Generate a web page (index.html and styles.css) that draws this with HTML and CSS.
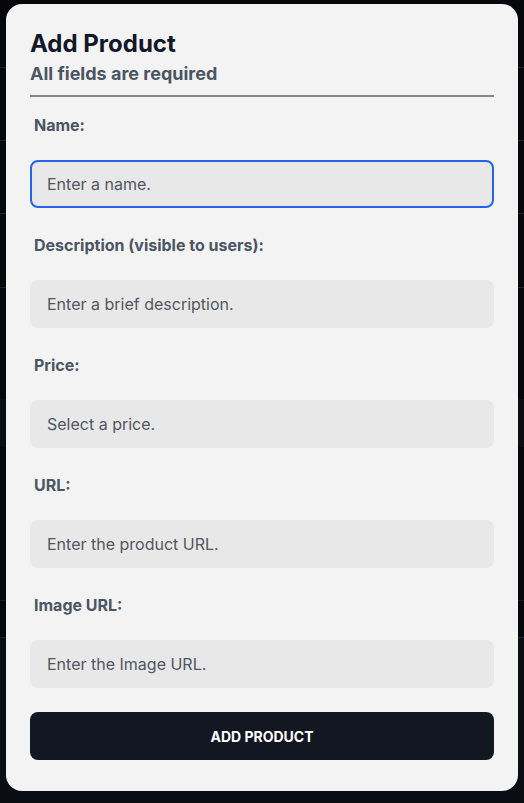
FILE: index.html
```html
<!DOCTYPE html>
<html lang="en">
<head>
<meta charset="utf-8">
<title>Add Product</title>
<link rel="stylesheet" href="styles.css">
</head>
<body>
<div class="backdrop">
  <div class="bg-row r1"></div>
  <div class="bg-row r2"></div>
  <div class="bg-row r3"></div>
  <div class="bg-row r4"></div>
  <div class="bg-row r5"></div>
  <div class="bg-row r6"></div>
  <div class="bg-row r7"></div>
  <div class="bg-row r8"></div>
  <div class="bg-row r9"></div>
</div>
<div class="overlay">
  <form class="modal">
    <div class="modal-head">
      <h1 class="title">Add Product</h1>
      <p class="subtitle">All fields are required</p>
    </div>
    <div class="field">
      <label class="label" for="name">Name:</label>
      <input class="input focused" id="name" type="text" placeholder="Enter a name.">
    </div>
    <div class="field">
      <label class="label" for="desc">Description (visible to users):</label>
      <input class="input" id="desc" type="text" placeholder="Enter a brief description.">
    </div>
    <div class="field">
      <label class="label" for="price">Price:</label>
      <input class="input" id="price" type="text" placeholder="Select a price.">
    </div>
    <div class="field">
      <label class="label" for="url">URL:</label>
      <input class="input" id="url" type="text" placeholder="Enter the product URL.">
    </div>
    <div class="field">
      <label class="label" for="img">Image URL:</label>
      <input class="input" id="img" type="text" placeholder="Enter the Image URL.">
    </div>
    <button class="submit" type="button">ADD PRODUCT</button>
  </form>
</div>
</body>
</html>
```
FILE: styles.css
```css
* { box-sizing: border-box; }
html, body {
  margin: 0;
  padding: 0;
  height: 100%;
}
body {
  background: #06070a;
  font-family: Inter, "Noto Sans", sans-serif;
  overflow: hidden;
}
.backdrop {
  display: flex;
  flex-direction: column;
}
.bg-row { flex: none; }
.r1 { height: 68px; border-bottom: 1px solid #1b2432; }
.r2 { height: 73px; border-bottom: 1px solid #1b2432; }
.r3 { height: 73px; border-bottom: 1px solid #1b2432; }
.r4 { height: 74px; border-bottom: 1px solid #1b2432; }
.r5 { height: 111px; }
.r6 { height: 48px; background: #0b0d13; }
.r7 { height: 154px; border-bottom: 1px solid #15171c; }
.r8 { height: 37px; border-bottom: 1px solid #1b2432; }
.r9 { height: 170px; background: #0b0d14; }
.overlay {
  position: fixed;
  inset: 0;
  padding: 4px 6px;
}
.modal {
  width: 512px;
  height: 787px;
  background: #f3f3f3;
  border-radius: 16px;
  padding: 24px 24px 31px;
  display: flex;
  flex-direction: column;
  margin: 0;
}
.modal-head {
  border-bottom: 2px solid #878787;
  padding-bottom: 7px;
  margin-bottom: 18px;
}
.title {
  margin: 0;
  font-size: 24px;
  line-height: 32px;
  font-weight: 700;
  color: #111827;
}
.subtitle {
  margin: 0;
  font-size: 18px;
  line-height: 28px;
  font-weight: 700;
  color: #4b5563;
}
.field {
  display: flex;
  flex-direction: column;
  margin-bottom: 27px;
}
.field:last-of-type { margin-bottom: 24px; }
.label {
  font-size: 16px;
  line-height: 20px;
  font-weight: 700;
  color: #4b5563;
  padding: 0 4px;
  margin-bottom: 25px;
}
.input {
  height: 48px;
  width: 100%;
  border: 2px solid transparent;
  border-radius: 8px;
  background: #e8e8e8;
  padding: 0 15px;
  font-family: inherit;
  font-size: 16px;
  color: #111827;
  outline: none;
}
.input::placeholder { color: #525760; opacity: 1; }
.input.focused { border-color: #2563eb; }
.submit {
  height: 48px;
  width: 100%;
  border: 0;
  border-radius: 8px;
  background: #131722;
  color: #ffffff;
  font-family: inherit;
  font-size: 14px;
  font-weight: 700;
  letter-spacing: 0;
}
```
